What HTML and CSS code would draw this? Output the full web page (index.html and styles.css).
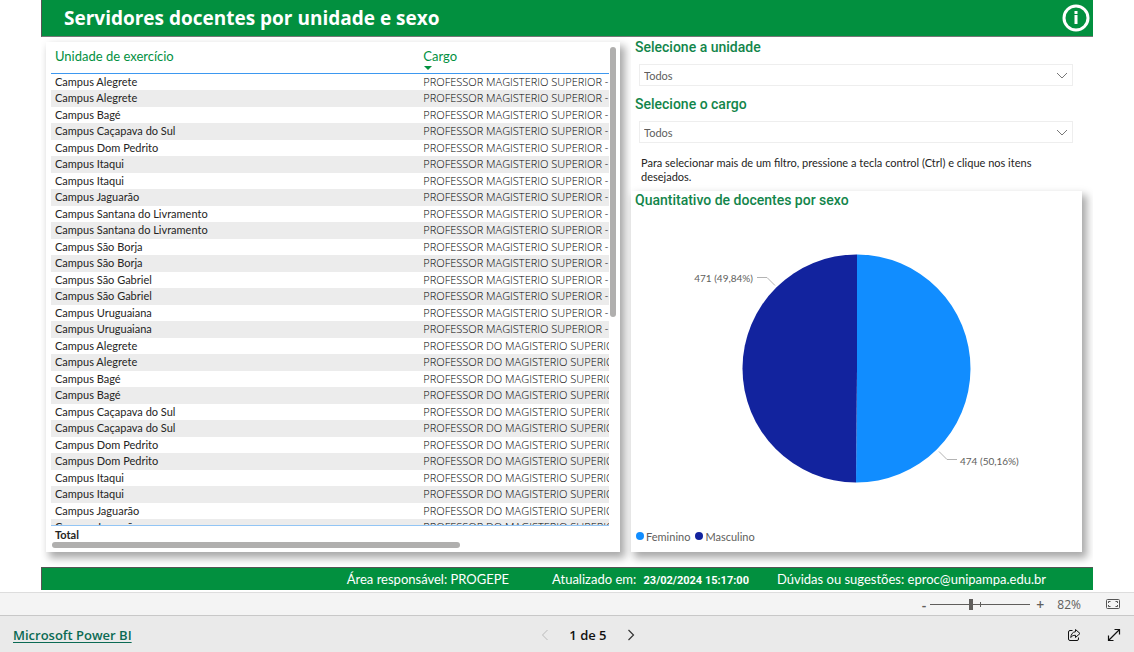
FILE: index.html
```html
<!DOCTYPE html>
<html lang="pt-BR">
<head>
<meta charset="utf-8">
<title>Servidores docentes por unidade e sexo</title>
<link rel="stylesheet" href="styles.css">
</head>
<body>
<div class="report">
  <header class="report-header">
    <h1>Servidores docentes por unidade e sexo</h1>
    <button class="info" aria-label="Informações">
      <svg width="28" height="28" viewBox="0 0 28 28"><circle cx="14" cy="14" r="12" fill="none" stroke="#fff" stroke-width="3"/><path d="M12.500 7h3v3h-3zM12.500 11h3v9h-3z" fill="#fff"/></svg>
    </button>
  </header>
  <main class="content">
    <section class="panel table-panel">
      <div class="table-clip">
        <table>
          <thead><tr><th class="col-unit">Unidade de exercício</th><th>Cargo<span class="sort"></span></th></tr></thead>
          <tbody id="rows"></tbody>
        </table>
      </div>
      <div class="total">Total</div>
      <div class="bar-v"></div>
      <div class="bar-h"></div>
    </section>
    <div class="side">
      <div class="filters">
        <label for="unidade">Selecione a unidade</label>
        <div class="select-box"><select id="unidade"><option>Todos</option></select><svg class="chevron" width="12" height="8" viewBox="0 0 12 8"><path d="M1 1l5 5 5-5" fill="none" stroke="#777"/></svg></div>
        <label for="cargo">Selecione o cargo</label>
        <div class="select-box"><select id="cargo"><option>Todos</option></select><svg class="chevron" width="12" height="8" viewBox="0 0 12 8"><path d="M1 1l5 5 5-5" fill="none" stroke="#777"/></svg></div>
        <p class="hint">Para selecionar mais de um filtro, pressione a tecla control (Ctrl) e clique nos itens desejados.</p>
      </div>
      <section class="panel chart-panel">
        <h2>Quantitativo de docentes por sexo</h2>
        <svg class="pie" viewBox="-1 1 451 316" role="img" aria-label="Docentes por sexo">
          <path d="M225 45A114 114 0 0 1 224 273L225 159Z" fill="#118dff"/>
          <path d="M225 45A114 114 0 0 0 224 273L225 159Z" fill="#12239e"/>
          <path d="M125 68h10l8 8M307 242l8 8h10" fill="none" stroke="#b3b3b3"/>
          <text x="121" y="72" text-anchor="end">471 (49,84%)</text>
          <text x="328" y="255">474 (50,16%)</text>
        </svg>
        <div class="legend"><span class="dot female"></span><span>Feminino</span><span class="dot male"></span><span>Masculino</span></div>
      </section>
    </div>
  </main>
  <footer class="report-footer">
    <span class="area">Área responsável: PROGEPE</span>
    <span class="updated">Atualizado em: <b>23/02/2024 15:17:00</b></span>
    <span>Dúvidas ou sugestões: eproc@unipampa.edu.br</span>
  </footer>
</div>
<div class="zoom-bar">
  <button class="step" aria-label="Reduzir">-</button>
  <input type="range" min="0" max="100" value="40" aria-label="Zoom">
  <button class="step" aria-label="Ampliar">+</button>
  <span class="zoom-value">82%</span>
  <button aria-label="Ajustar à página"><svg width="14" height="10" viewBox="0 0 14 10" fill="none" stroke="#555"><rect x=".5" y=".5" width="13" height="9" rx="1"/><path d="M2.500 4V2.500H4.500M9.500 2.500h2V4M11.500 6v1.500h-2M4.500 7.500h-2V6"/></svg></button>
</div>
<nav class="nav-bar">
  <div class="brand"><a href="#">Microsoft Power BI</a></div>
  <div class="pager">
    <button aria-label="Página anterior" disabled><svg width="8" height="12" viewBox="0 0 8 12"><path d="M6.500 1l-5 5 5 5" fill="none" stroke="#bbb"/></svg></button>
    <span>1 de 5</span>
    <button aria-label="Próxima página"><svg width="8" height="12" viewBox="0 0 8 12"><path d="M1.500 1l5 5-5 5" fill="none" stroke="#333" stroke-width="1.200"/></svg></button>
  </div>
  <div class="actions">
    <button aria-label="Compartilhar"><svg width="14" height="14" viewBox="0 0 14 14" fill="none" stroke="#111" stroke-linejoin="round"><path d="M5.500 2.500H3A1.500 1.500 0 0 0 1.500 4v7A1.500 1.500 0 0 0 3 12.500h7a1.500 1.500 0 0 0 1.500-1.500V9.500"/><path d="M8.500 1.500l4.500 4-4.500 4V7.300C6 7.200 4.800 8 3.800 9.500 4 6.500 5.500 4 8.500 3.700z"/></svg></button>
    <button aria-label="Tela inteira"><svg width="14" height="14" viewBox="0 0 14 14" fill="none" stroke="#111" stroke-width="1.200"><path d="M1.500 12.500l11-11M7.500 1.500h5v5M1.500 7.500v5h5"/></svg></button>
  </div>
</nav>
<script src="rows.js"></script>
</body>
</html>
```
FILE: rows.js
```js
const superior = "PROFESSOR MAGISTERIO SUPERIOR -";
const carreira = "PROFESSOR DO MAGISTERIO SUPERIOR";
const groups = [
  [superior, ["Alegrete", "Alegrete", "Bagé", "Caçapava do Sul", "Dom Pedrito", "Itaqui", "Itaqui", "Jaguarão",
    "Santana do Livramento", "Santana do Livramento", "São Borja", "São Borja", "São Gabriel", "São Gabriel",
    "Uruguaiana", "Uruguaiana"]],
  [carreira, ["Alegrete", "Alegrete", "Bagé", "Bagé", "Caçapava do Sul", "Caçapava do Sul", "Dom Pedrito",
    "Dom Pedrito", "Itaqui", "Itaqui", "Jaguarão", "Jaguarão"]]
];
const body = document.getElementById("rows");
for (const [cargo, units] of groups) {
  for (const unit of units) {
    const row = body.insertRow();
    row.insertCell().textContent = "Campus " + unit;
    const cell = row.insertCell();
    cell.className = "cargo";
    cell.textContent = cargo;
  }
}
```
FILE: styles.css
```css
* { box-sizing: border-box; }
body {
  margin: 0;
  height: 100vh;
  display: flex;
  flex-direction: column;
  background: #fff;
  font-family: Lato, "Open Sans", sans-serif;
  font-size: 11px;
  color: #252423;
}
button { border: 0; padding: 0; background: none; font: inherit; color: inherit; display: flex; align-items: center; }
.report { flex: 1; min-height: 0; display: flex; flex-direction: column; margin: 0 41px; padding-bottom: 2px; overflow: hidden; }
.report-header {
  height: 37px; flex: none;
  display: flex; align-items: center; justify-content: space-between;
  padding: 0 3px 1px 22px;
  background: #02903f;
  border-bottom: 1px solid #777;
  border-left: 1px solid #555;
  color: #fff;
}
h1 { margin: 0; font-family: "Open Sans", sans-serif; font-size: 19px; line-height: 24px; font-weight: 700; }
.content {
  flex: 1; min-height: 0;
  display: grid; grid-template-columns: 574fr 451fr; gap: 11px;
  padding: 5px 11px 15px 5px;
}
.panel { background: #fff; box-shadow: 4px 5px 8px 1px rgba(0, 0, 0, .34); }
.table-panel { position: relative; min-height: 0; min-width: 0; display: flex; flex-direction: column; padding: 0 11px 9px 5px; }
.table-clip { flex: 1; min-height: 0; overflow: hidden; border-bottom: 1px solid #92c5f5; }
table { width: 100%; table-layout: fixed; border-collapse: collapse; }
th { position: relative; height: 31px; padding: 0 4px 2px; border-bottom: 1px solid #3d98f0; text-align: left; font-size: 13px; font-weight: 400; color: #02903f; }
.col-unit { width: 66%; }
.sort { position: absolute; left: 5px; bottom: 3px; border: 4px solid transparent; border-top-color: #02903f; border-bottom: 0; }
td { height: 16px; padding: 0 0 0 4px; line-height: 16px; white-space: nowrap; overflow: hidden; }
td.cargo { font-family: "Open Sans", sans-serif; font-weight: 300; color: #000; }
tr:nth-child(even) td { height: 17px; background: #ececec; }
.total { height: 17px; line-height: 17px; padding-left: 4px; font-weight: 700; }
.bar-v, .bar-h { position: absolute; background: #b0afae; border-radius: 3px; }
.bar-v { right: 4px; top: 1%; width: 6px; height: 53%; }
.bar-h { left: 6px; bottom: 4px; width: 71%; height: 6px; }
.side { position: relative; min-width: 0; min-height: 0; display: flex; flex-direction: column; }
.filters { height: 149px; flex: none; background: #fff; padding: 0 9px 0 8px; }
.filters label, h2 { display: block; margin: 0; font-family: Roboto, sans-serif; font-size: 14px; line-height: 18px; font-weight: 500; color: #12854a; }
.filters label { margin-left: -4px; height: 22px; line-height: 10px; }
.select-box { position: relative; height: 22px; margin-bottom: 13px; }
select { appearance: none; width: 100%; height: 22px; padding: 0 4px; border: 1px solid #eee; border-radius: 0; background: #fff; font: inherit; color: #605e5c; }
.chevron { position: absolute; right: 5px; top: 8px; pointer-events: none; }
.hint { margin: 0; padding: 0 2px; line-height: 14px; }
.chart-panel { flex: 1; min-height: 0; display: flex; flex-direction: column; padding-bottom: 8px; }
h2 { padding-left: 4px; flex: none; }
.pie { flex: 1; min-height: 0; width: 100%; }
.pie text { font-size: 10px; fill: #605e5c; }
.legend { display: flex; align-items: center; gap: 2px; padding-left: 5px; height: 16px; color: #605e5c; }
.dot { width: 8px; height: 8px; border-radius: 50%; }
.female { background: #118dff; }
.male { background: #12239e; margin-left: 3px; }
.report-footer {
  height: 23px; flex: none;
  display: flex; align-items: center; justify-content: flex-end; gap: 28px;
  padding-right: 47px;
  background: #02903f; border-top: 1px solid #555; border-left: 1px solid #555;
  color: #fff; font-size: 13px; white-space: nowrap; position: relative;
}
.area { margin-right: 15px; }
.updated b { font-family: Roboto, sans-serif; font-size: 11px; margin-left: 4px; }
.zoom-bar { height: 23px; flex: none; display: flex; align-items: center; justify-content: flex-end; background: #f4f4f4; border-top: 1px solid #ddd; padding-right: 14px; font-family: "Open Sans", sans-serif; font-size: 12px; color: #605e5c; }
.step { font-size: 14px; font-weight: 600; }
input[type="range"] {
  appearance: none; width: 100px; height: 11px; margin: 0 6px 0 4px;
  background: linear-gradient(#605e5c, #605e5c) 50% 50% / 1px 5px no-repeat, linear-gradient(#605e5c, #605e5c) 0 50% / 100% 1px no-repeat;
}
input[type="range"]::-webkit-slider-thumb { appearance: none; width: 4px; height: 11px; background: #605e5c; }
.zoom-value { margin: 0 25px 0 13px; }
.nav-bar { height: 37px; flex: none; display: grid; grid-template-columns: 542fr auto 499fr; align-items: center; background: #eaeaea; border-top: 1px solid #c8c8c8; padding: 2px 13px 0; font-family: "Open Sans", sans-serif; }
.brand { font-size: 13px; }
.brand a { color: #0b6a54; font-weight: 600; text-underline-offset: 2px; }
.pager { display: flex; align-items: center; gap: 20px; font-size: 13px; font-weight: 600; color: #111; }
.actions { display: flex; justify-content: flex-end; gap: 26px; }
```
